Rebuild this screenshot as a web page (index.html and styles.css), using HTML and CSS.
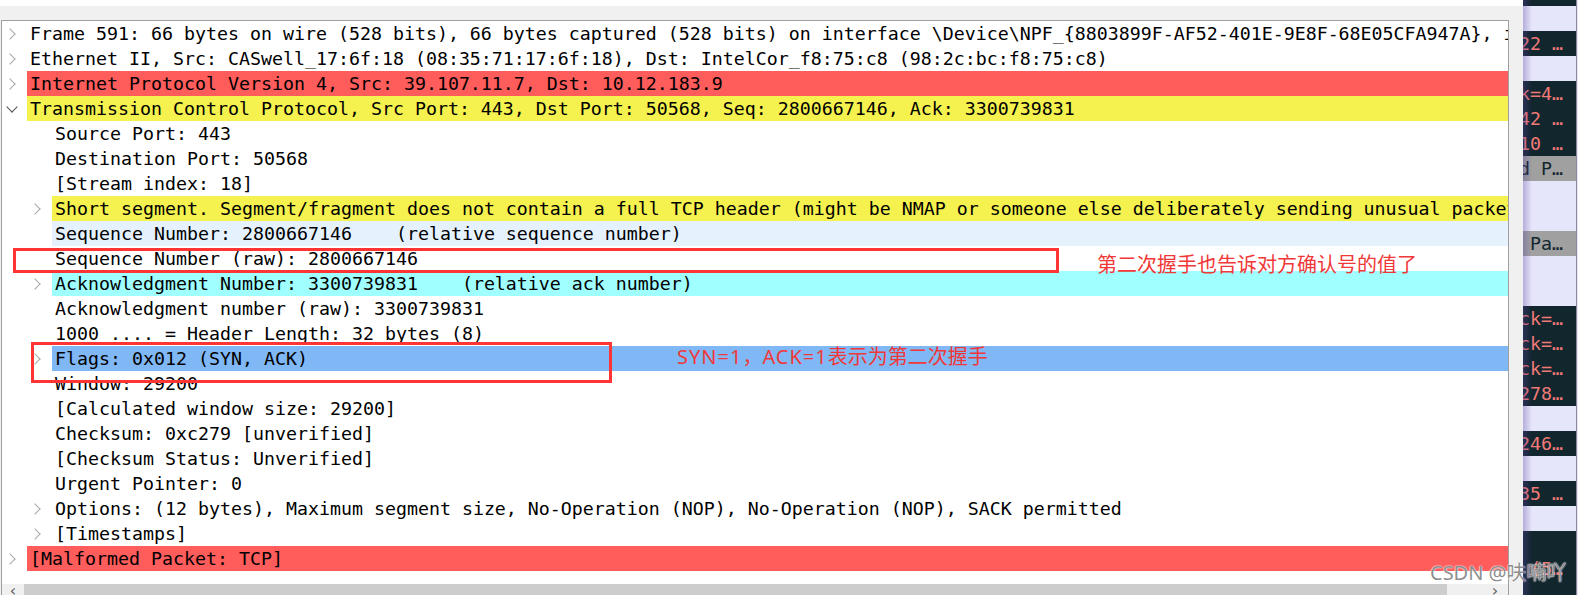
FILE: index.html
```html
<!DOCTYPE html>
<html>
<head>
  <title>Packet Details</title>
  <meta name="viewport" content="width=device-width, initial-scale=1.0">
  <link rel="stylesheet" href="styles.css">
</head>
<body>
  <div class="screen">
    <div class="left">
      <div class="white-band"></div>
      <div class="gray-band"></div>
      <div class="body-row">
        <div class="panel">
          <div class="tree">
            <div class="row"><span class="arrow closed"></span><span class="label">Frame 591: 66 bytes on wire (528 bits), 66 bytes captured (528 bits) on interface \Device\NPF_{8803899F-AF52-401E-9E8F-68E05CFA947A}, id 0</span></div>
            <div class="row"><span class="arrow closed"></span><span class="label">Ethernet II, Src: CASwell_17:6f:18 (08:35:71:17:6f:18), Dst: IntelCor_f8:75:c8 (98:2c:bc:f8:75:c8)</span></div>
            <div class="row"><span class="arrow closed"></span><span class="label red">Internet Protocol Version 4, Src: 39.107.11.7, Dst: 10.12.183.9</span></div>
            <div class="row"><span class="arrow open"></span><span class="label yellow">Transmission Control Protocol, Src Port: 443, Dst Port: 50568, Seq: 2800667146, Ack: 3300739831</span></div>
            <div class="row child"><span class="arrow"></span><span class="label">Source Port: 443</span></div>
            <div class="row child"><span class="arrow"></span><span class="label">Destination Port: 50568</span></div>
            <div class="row child"><span class="arrow"></span><span class="label">[Stream index: 18]</span></div>
            <div class="row child"><span class="arrow closed"></span><span class="label yellow">Short segment. Segment/fragment does not contain a full TCP header (might be NMAP or someone else deliberately sending unusual packets)</span></div>
            <div class="row child"><span class="arrow"></span><span class="label pale">Sequence Number: 2800667146    (relative sequence number)</span></div>
            <div class="row child"><span class="arrow"></span><span class="label">Sequence Number (raw): 2800667146</span></div>
            <div class="row child"><span class="arrow closed"></span><span class="label cyan">Acknowledgment Number: 3300739831    (relative ack number)</span></div>
            <div class="row child"><span class="arrow"></span><span class="label">Acknowledgment number (raw): 3300739831</span></div>
            <div class="row child"><span class="arrow"></span><span class="label">1000 .... = Header Length: 32 bytes (8)</span></div>
            <div class="row child"><span class="arrow closed"></span><span class="label blue">Flags: 0x012 (SYN, ACK)</span></div>
            <div class="row child"><span class="arrow"></span><span class="label">Window: 29200</span></div>
            <div class="row child"><span class="arrow"></span><span class="label">[Calculated window size: 29200]</span></div>
            <div class="row child"><span class="arrow"></span><span class="label">Checksum: 0xc279 [unverified]</span></div>
            <div class="row child"><span class="arrow"></span><span class="label">[Checksum Status: Unverified]</span></div>
            <div class="row child"><span class="arrow"></span><span class="label">Urgent Pointer: 0</span></div>
            <div class="row child"><span class="arrow closed"></span><span class="label">Options: (12 bytes), Maximum segment size, No-Operation (NOP), No-Operation (NOP), SACK permitted</span></div>
            <div class="row child"><span class="arrow closed"></span><span class="label">[Timestamps]</span></div>
            <div class="row"><span class="arrow closed"></span><span class="label red">[Malformed Packet: TCP]</span></div>
          </div>
          <div class="hscroll">
            <span class="btn">&#8249;</span>
            <span class="thumb"></span>
            <span class="track"><span class="btn">&#8250;</span></span>
          </div>
        </div>
      </div>
    </div>

    <div class="strip">
      <div class="srow dark"></div>
      <div class="srow lav"></div>
      <div class="srow dark"><span>122 …</span></div>
      <div class="srow lav"></div>
      <div class="srow dark"><span>ack=4…</span></div>
      <div class="srow dark"><span>142 …</span></div>
      <div class="srow dark"><span>110 …</span></div>
      <div class="srow gray"><span>ed P…</span></div>
      <div class="srow lav"></div>
      <div class="srow lav"></div>
      <div class="srow gray"><span>d Pa…</span></div>
      <div class="srow lav"></div>
      <div class="srow lav"></div>
      <div class="srow dark"><span>Ack=…</span></div>
      <div class="srow dark"><span>Ack=…</span></div>
      <div class="srow dark"><span>Ack=…</span></div>
      <div class="srow dark"><span>1278…</span></div>
      <div class="srow lav"></div>
      <div class="srow dark"><span>1246…</span></div>
      <div class="srow lav"></div>
      <div class="srow dark"><span>435 …</span></div>
      <div class="srow lav"></div>
      <div class="srow dark"></div>
      <div class="srow dark"><span>= (5…</span></div>
      <div class="srow dark"></div>
    </div>
    <div class="edge"></div>

    <div class="mark mark-seq"></div>
    <div class="note note-seq">第二次握手也告诉对方确认号的值了</div>
    <div class="mark mark-flags"></div>
    <div class="note note-flags"><span class="latin">SYN=1</span>，<span class="latin">ACK=1</span>表示为第二次握手</div>
    <div class="watermark">CSDN @呋喃吖</div>
  </div>
</body>
</html>
```

FILE: styles.css
```css
* {
  margin: 0;
  padding: 0;
  box-sizing: border-box;
}

body {
  width: 1578px;
  height: 595px;
  overflow: hidden;
  background: #f0f0f0;
  font-family: 'DejaVu Sans Mono', 'Liberation Mono', monospace;
  color: #000;
}

.screen {
  position: relative;
  display: flex;
  width: 1578px;
  height: 595px;
  overflow: hidden;
}

.left {
  width: 1523px;
  display: flex;
  flex-direction: column;
}

.white-band {
  height: 6px;
  background: #fff;
}

.gray-band {
  height: 14px;
  background: #f0f0f0;
}

.body-row {
  flex: 1;
  display: flex;
  padding-left: 1px;
  padding-right: 14px;
  min-height: 0;
}

.panel {
  width: 1508px;
  border: 1px solid #a0a0a0;
  border-bottom: none;
  background: #fff;
  display: flex;
  flex-direction: column;
  overflow: hidden;
}

.tree {
  height: 563px;
  flex: none;
}

.row {
  display: flex;
  height: 25px;
  align-items: stretch;
  font-size: 18.27px;
  white-space: pre;
}

.arrow {
  width: 25px;
  flex: none;
  position: relative;
}

.row.child .arrow {
  width: 50px;
}

.arrow.closed::before {
  content: '';
  position: absolute;
  right: 13px;
  top: 8.5px;
  width: 7px;
  height: 7px;
  border-right: 1.7px solid #a8a8a8;
  border-bottom: 1.7px solid #a8a8a8;
  transform: rotate(-45deg);
}

.arrow.open::before {
  content: '';
  position: absolute;
  right: 11.5px;
  top: 6.5px;
  width: 7px;
  height: 7px;
  border-right: 1.7px solid #505050;
  border-bottom: 1.7px solid #505050;
  transform: rotate(45deg);
}

.label {
  flex: 1;
  padding-left: 3px;
  line-height: 25px;
  overflow: hidden;
}

.red { background: #ff5c5c; }
.yellow { background: #f5f24f; }
.pale { background: #e5f2fd; }
.cyan { background: #a0ffff; }
.blue { background: #80b7f5; }

.hscroll {
  height: 17px;
  flex: none;
  display: flex;
  background: #f0f0f0;
}

.hscroll .btn {
  width: 22px;
  font-family: 'DejaVu Sans', sans-serif;
  font-size: 16px;
  line-height: 14px;
  color: #606060;
  text-align: center;
}

.thumb {
  width: 1423px;
  background: #cdcdcd;
}

.track {
  flex: 1;
  display: flex;
  justify-content: flex-end;
  padding-right: 2px;
}

/* right-hand window behind */
.strip {
  position: relative;
  width: 53px;
  display: flex;
  flex-direction: column;
  margin-top: -19px;
}

.strip::before {
  content: '';
  position: absolute;
  left: 0;
  top: 0;
  bottom: 0;
  width: 9px;
  background: linear-gradient(to right, rgba(90, 70, 160, 0.35), rgba(90, 70, 160, 0));
  z-index: 2;
}

.srow {
  height: 25px;
  flex: none;
  display: flex;
  justify-content: flex-end;
  align-items: center;
  padding-right: 13px;
  overflow: hidden;
  font-size: 18.27px;
  white-space: pre;
}

.srow.dark {
  background: #12262e;
  color: #f07a78;
}

.srow.lav {
  background: #e6e6fa;
}

.srow.gray {
  background: #a0a0a0;
  color: #12262e;
}

.edge {
  width: 2px;
  background: #e6e6fa;
  border-left: 1px solid #8a8a9a;
}

/* annotations */
.mark {
  position: absolute;
  border: 3px solid #ff3535;
}

.mark-seq {
  left: 13px;
  top: 248px;
  width: 1046px;
  height: 25px;
}

.mark-flags {
  left: 31px;
  top: 342px;
  width: 581px;
  height: 41px;
}

.note {
  position: absolute;
  font-family: 'Noto Sans CJK SC', sans-serif;
  font-size: 20px;
  line-height: 20px;
  color: #f03838;
  white-space: nowrap;
}

.note-seq {
  left: 1097px;
  top: 254px;
}

.note-flags {
  left: 677px;
  top: 346px;
}

.note .latin {
  font-family: 'Noto Sans', sans-serif;
  letter-spacing: 1px;
}

.watermark {
  position: absolute;
  left: 1430px;
  top: 562px;
  font-family: 'Noto Sans', 'Noto Sans CJK SC', sans-serif;
  font-size: 20px;
  line-height: 22px;
  color: rgba(120, 120, 120, 0.85);
  text-shadow: 0 0 2px #fff, 0 0 1px #fff;
  white-space: nowrap;
}
```
